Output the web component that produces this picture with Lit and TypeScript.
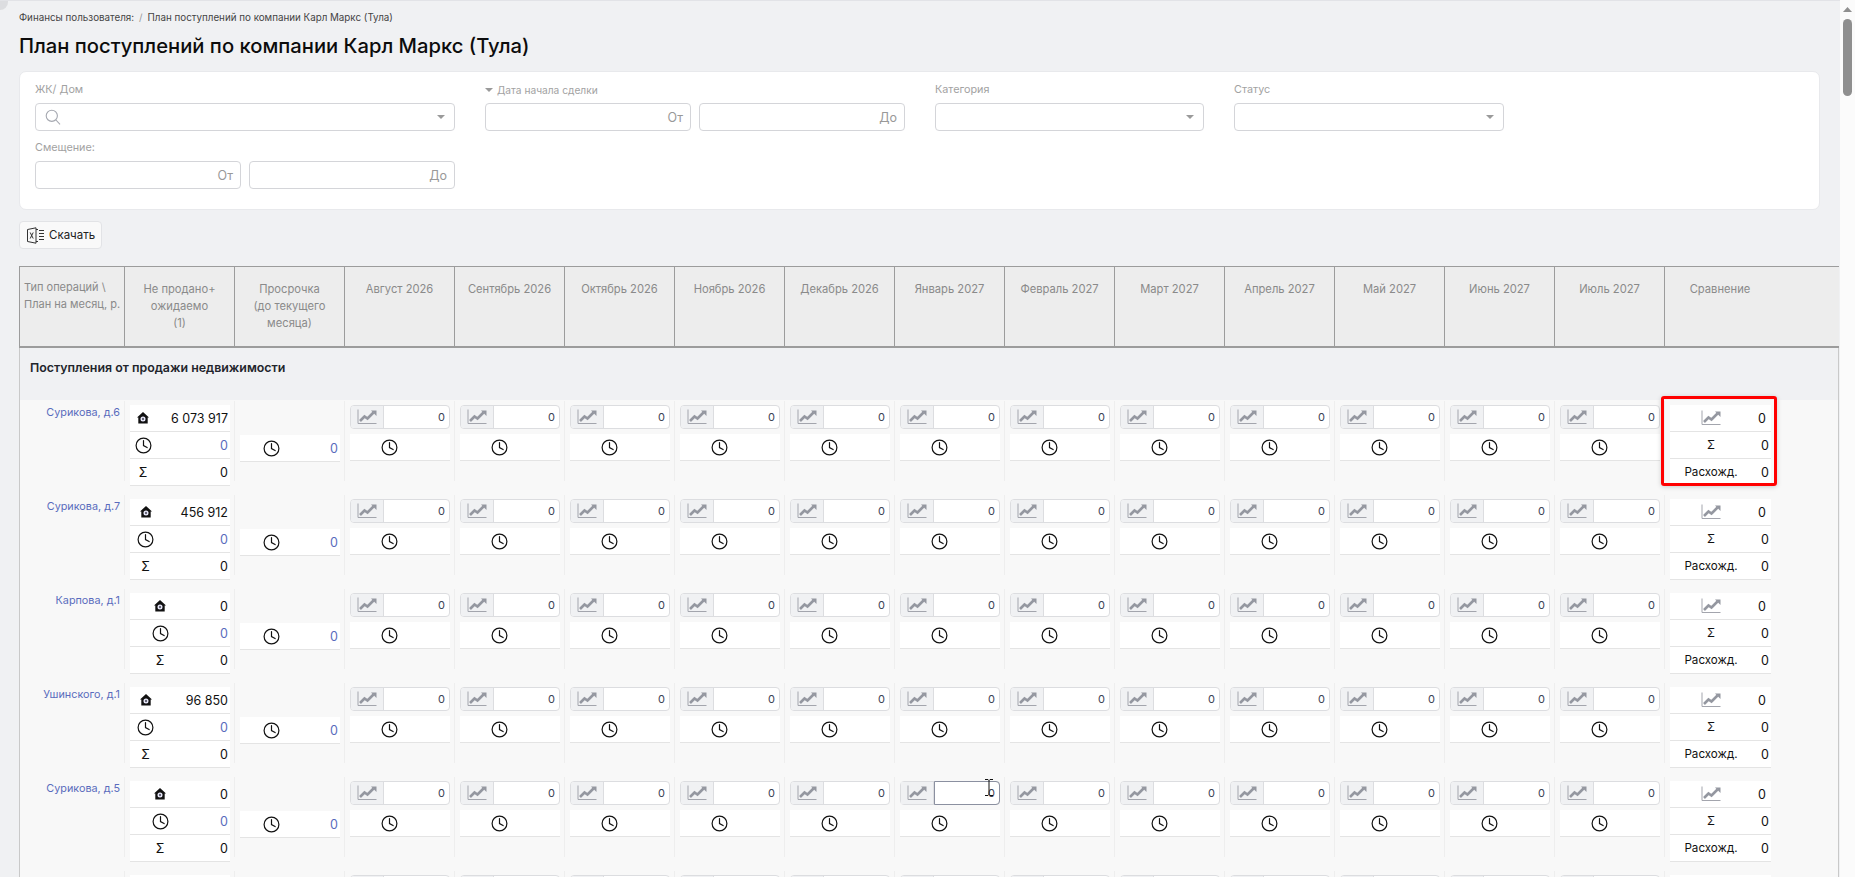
import { LitElement, html, css, svg } from 'lit';
import { customElement } from 'lit/decorators.js';

const MONTHS = [
  'Август 2026', 'Сентябрь 2026', 'Октябрь 2026', 'Ноябрь 2026', 'Декабрь 2026', 'Январь 2027',
  'Февраль 2027', 'Март 2027', 'Апрель 2027', 'Май 2027', 'Июнь 2027', 'Июль 2027',
];

// iconCol is the width the icon column ends up with next to the value
const ROWS = [
  { name: 'Сурикова, д.6', plan: '6 073 917', iconCol: 26, marked: true },
  { name: 'Сурикова, д.7', plan: '456 912', iconCol: 31 },
  { name: 'Карпова, д.1', plan: '0', iconCol: 60 },
  { name: 'Ушинского, д.1', plan: '96 850', iconCol: 31 },
  { name: 'Сурикова, д.5', plan: '0', iconCol: 60, focusMonth: 5 },
];

const clock = () => html`<svg class="ico" width="17" height="17" viewBox="0 0 17 17" fill="none" stroke="#111" stroke-width="1.2">
  <circle cx="8.5" cy="8.5" r="7.4"></circle><path d="M8.5 3.6v5l3.6 2" stroke-linecap="round"></path></svg>`;

const house = () => html`<svg class="ico" width="12" height="12" viewBox="0 0 11 11">
  <path d="M5.5 0 11 5H9.8v5.5H1.2V5H0z" fill="#111"></path>
  <circle cx="5.5" cy="6.4" r="2.3" fill="#eef"></circle><circle cx="5.5" cy="6.4" r="1.1" fill="#667"></circle></svg>`;

const chart = () => html`<svg class="ico" width="20" height="16" viewBox="0 0 20 16" fill="none">
  <path d="M1 .5v14h18.5" stroke="#a3a5ad" stroke-width="1"></path>
  <path d="M3 12 7.5 7.5l3 2 6-6" stroke="#9497a0" stroke-width="2.6"></path>
  <path d="M14 1.5h5.5V7z" fill="#9497a0"></path></svg>`;

const caret = svg`<path d="M0 0h8L4 4z" fill="#9a9a9a"></path>`;

@customElement('app-root')
export class AppRoot extends LitElement {
  static styles = css`
    :host {
      display: flex;
      height: 100vh;
      overflow: hidden;
      background: #fbfbfb;
      font-family: Inter, 'Noto Sans', sans-serif;
      font-size: 12px;
      color: #111;
    }
    .main {
      position: relative;
      width: 1840px;
      flex: none;
      box-sizing: border-box;
      height: 877px;
      overflow: hidden;
      padding: 11px 0 0 19px;
      background: #f0f1f3;
      border-top: 1px solid #e2e3e7;
    }
    .corner {
      position: absolute;
      left: 0;
      top: -1px;
      width: 8px;
      height: 10px;
      background: #dcdde0;
      border-bottom-right-radius: 8px;
    }
    .crumbs {
      height: 11px;
      line-height: 11px;
      font-size: 9.8px;
      color: #444;
      display: flex;
      gap: 5px;
    }
    .crumbs i { color: #999; font-style: normal; }
    h1 {
      margin: 11px 0 0;
      height: 24px;
      line-height: 24px;
      font-size: 20.2px;
      font-weight: 500;
      color: #0c0c0c;
    }
    .filters {
      box-sizing: border-box;
      width: 1801px;
      height: 139px;
      margin-top: 13px;
      padding: 11px 15px 0;
      background: #fff;
      border: 1px solid #e8e9ec;
      border-radius: 7px;
      display: grid;
      grid-template-columns: 420px 420px 269px 299px;
      grid-template-rows: 58px 58px;
      column-gap: 30px;
    }
    .filters > div { min-width: 0; }
    .lbl {
      height: 14px;
      line-height: 14px;
      font-size: 10.8px;
      color: #a2a2a2;
      display: flex;
      align-items: center;
      gap: 4px;
      margin-bottom: 6px;
    }
    .lbl.date { font-size: 10.2px; }
    .inp {
      box-sizing: border-box;
      height: 28px;
      background: #fff;
      border: 1px solid #d4d5d9;
      border-radius: 4px;
      display: flex;
      align-items: center;
      justify-content: space-between;
      padding: 0 9px;
      color: #999;
      font-size: 12.5px;
    }
    .pair { display: grid; grid-template-columns: 206px 206px; column-gap: 8px; }
    .inp.to { justify-content: flex-end; padding: 0 7px; }
    .inp.end { justify-content: flex-end; }
    .cat { width: 269px; }
    .stat { width: 270px; }
    .btn {
      box-sizing: border-box;
      width: 83px;
      height: 28px;
      margin-top: 11px;
      display: flex;
      align-items: center;
      gap: 4px;
      padding-left: 7px;
      background: #f9f9f9;
      border: 1px solid #e2e3e6;
      border-radius: 4px;
      font-size: 11.5px;
      color: #222;
    }
    .table {
      width: 1820px;
      margin-top: 17px;
    }
    .head, .row {
      display: grid;
      grid-template-columns: 105px repeat(15, 110px) 1fr;
    }
    .head {
      box-sizing: border-box;
      height: 82px;
      background: #ededed;
      border: 1px solid #9c9c9c;
      border-width: 1px 0 2px 1px;
      color: #8a8a8a;
      font-size: 11.2px;
      line-height: 17px;
    }
    .head > div {
      box-sizing: border-box;
      padding-top: 14px;
      text-align: center;
      border-right: 1px solid #9c9c9c;
    }
    .head > div:first-child { padding: 12px 0 0 4px; text-align: left; white-space: nowrap; font-size: 11px; }
    .head > div:nth-last-child(-n + 2) { border-right: none; }
    .body {
      border: 1px solid #c9c9c9;
      border-width: 0 1px 0 1px;
      width: 1818px;
    }
    .section {
      box-sizing: border-box;
      height: 52px;
      padding: 12px 0 0 10px;
      line-height: 16px;
      font-size: 12.4px;
      font-weight: 600;
      color: #22252b;
    }
    .row {
      height: 94px;
      background: #f8f8f8;
      align-items: start;
      padding-top: 1px;
      box-sizing: border-box;
    }
    .cell {
      position: relative;
      box-sizing: border-box;
      height: 80px;
      border-right: 1px solid #eeeeee;
      padding: 4px 4px 0 5px;
    }
    .cell:nth-last-child(-n + 2) { border-right: none; }
    .name {
      padding: 4px 4px 0 0;
      text-align: right;
      line-height: 16px;
      color: #5a6cbd;
      font-size: 10.8px;
    }
    .line {
      box-sizing: border-box;
      height: 27px;
      display: grid;
      align-items: center;
      justify-items: center;
      background: #fff;
      border-bottom: 1px solid #e4e4e4;
      font-size: 12.5px;
    }
    .line b { justify-self: end; padding-right: 2px; font-weight: 400; }
    .line .blue { color: #5a6cbd; }
    .ico { display: block; }
    .delay {
      box-sizing: border-box;
      height: 27px;
      margin-top: 30px;
      display: grid;
      grid-template-columns: 62px 1fr;
      align-items: center;
      justify-items: center;
      background: #fff;
      border-bottom: 1px solid #e4e4e4;
      font-size: 12.5px;
      color: #5a6cbd;
    }
    .delay b { justify-self: end; padding-right: 2px; font-weight: 400; }
    .plan {
      box-sizing: border-box;
      height: 24px;
      display: flex;
      border: 1px solid #dcdde0;
      border-radius: 4px;
      background: #fff;
      overflow: hidden;
    }
    .plan .add {
      width: 32px;
      flex: none;
      display: flex;
      align-items: center;
      justify-content: center;
      background: #f0f1f3;
      border-right: 1px solid #dcdde0;
    }
    .plan .val {
      flex: 1;
      text-align: right;
      padding-right: 4px;
      line-height: 22px;
      font-size: 11px;
      color: #3b4256;
    }
    .plan.focus { overflow: visible; }
    .plan.focus .val { margin: -1px -1px -1px 0; border: 1px solid #8b90a0; border-radius: 0 4px 4px 0; }
    .beam { position: absolute; left: 90px; top: 2px; z-index: 2; }
    .clock {
      box-sizing: border-box;
      height: 27px;
      margin-top: 5px;
      padding-left: 31px;
      display: flex;
      align-items: center;
      background: #fff;
      border-bottom: 1px solid #e4e4e4;
    }
    .cmp { position: relative; width: 101px; }
    .cmp .line { grid-template-columns: 82px 1fr; font-size: 11.6px; }
    .cmp .line b { font-size: 12.5px; }
    .cmp .line.top b { padding-right: 5px; }
    .mark {
      position: absolute;
      left: -9px;
      top: -9px;
      width: 116px;
      height: 90px;
      box-sizing: border-box;
      border: 3px solid #f00;
      border-radius: 3px;
      box-shadow: 0 1px 5px rgba(0, 0, 0, 0.18);
      pointer-events: none;
    }
    .scroll {
      position: relative;
      flex: 1;
      background: #fbfbfb;
    }
    .thumb {
      position: absolute;
      left: 3px;
      top: 19px;
      width: 9px;
      height: 77px;
      border-radius: 5px;
      background: #8f8f8f;
    }
    .arrow {
      position: absolute;
      left: 3px;
      top: 7px;
    }
  `;

  private planRow(row: typeof ROWS[number]) {
    const cols = `grid-template-columns:${row.iconCol}px 1fr`;
    return html`<div class="row">
      <div class="cell name">${row.name}</div>
      <div class="cell">
        <div class="line" style=${cols}>${house()}<b>${row.plan}</b></div>
        <div class="line" style=${cols}>${clock()}<b class="blue">0</b></div>
        <div class="line" style=${cols}><span>Σ</span><b>0</b></div>
      </div>
      <div class="cell"><div class="delay">${clock()}<b>0</b></div></div>
      ${MONTHS.map((_, i) => html`<div class="cell">
        <div class="plan ${row.focusMonth === i ? 'focus' : ''}">
          <div class="add">${chart()}</div>
          <div class="val">0</div>
        </div>
        ${row.focusMonth === i
          ? html`<svg class="beam" width="8" height="17" viewBox="0 0 8 17" fill="none" stroke="#111" stroke-width="1"><path d="M0 .5h3l1 1 1-1h3M4 1.5v14M0 16.5h3l1-1 1 1h3"></path></svg>`
          : ''}
        <div class="clock">${clock()}</div>
      </div>`)}
      <div class="cell">
        <div class="cmp">
          <div class="line top">${chart()}<b>0</b></div>
          <div class="line"><span>Σ</span><b>0</b></div>
          <div class="line"><span>Расхожд.</span><b>0</b></div>
          ${row.marked ? html`<div class="mark"></div>` : ''}
        </div>
      </div>
      <div></div>
    </div>`;
  }

  // only the top edge of the next row shows above the fold, so no text in it
  private nextRowEdge() {
    return html`<div class="row">
      <div class="cell"></div>
      <div class="cell"><div class="line"></div></div>
      <div class="cell"></div>
      ${MONTHS.map(() => html`<div class="cell"><div class="plan"><div class="add"></div></div></div>`)}
      <div class="cell"><div class="cmp"><div class="line"></div></div></div>
      <div></div>
    </div>`;
  }

  render() {
    return html`
      <div class="main">
        <div class="corner"></div>
        <div class="crumbs"><span>Финансы пользователя:</span><i>/</i><span>План поступлений по компании Карл Маркс (Тула)</span></div>
        <h1>План поступлений по компании Карл Маркс (Тула)</h1>
        <div class="filters">
          <div>
            <div class="lbl">ЖК/ Дом</div>
            <div class="inp">
              <svg width="16" height="16" viewBox="0 0 16 16" fill="none" stroke="#a5a8b0" stroke-width="1.1"><circle cx="6.8" cy="6.8" r="5.6"></circle><path d="m11 11 4 4.4"></path></svg>
              <svg width="8" height="4" viewBox="0 0 8 4">${caret}</svg>
            </div>
          </div>
          <div>
            <div class="lbl date"><svg width="8" height="4" viewBox="0 0 8 4">${caret}</svg>Дата начала сделки</div>
            <div class="pair"><div class="inp to">От</div><div class="inp to">До</div></div>
          </div>
          <div>
            <div class="lbl">Категория</div>
            <div class="inp cat end"><svg width="8" height="4" viewBox="0 0 8 4">${caret}</svg></div>
          </div>
          <div>
            <div class="lbl">Статус</div>
            <div class="inp stat end"><svg width="8" height="4" viewBox="0 0 8 4">${caret}</svg></div>
          </div>
          <div>
            <div class="lbl">Смещение:</div>
            <div class="pair"><div class="inp to">От</div><div class="inp to">До</div></div>
          </div>
        </div>
        <div class="btn">
          <svg width="18" height="17" viewBox="0 0 18 17" fill="none" stroke="#333" stroke-width="1">
            <path d="M.5 2.5 9 .8v15.4L.5 14.5zM9 2.5h2M9 14.5h2"></path>
            <path d="m3.2 5.5 3 6M6.2 5.5l-3 6"></path>
            <path d="M12 3.5h5M12 6.5h5M12 9.5h5M12 12.5h5"></path>
          </svg>
          Скачать
        </div>
        <div class="table">
          <div class="head">
            <div>Тип операций \\<br />План на месяц, р.</div>
            <div>Не продано+<br />ожидаемо<br />(1)</div>
            <div>Просрочка<br />(до текущего<br />месяца)</div>
            ${MONTHS.map((m) => html`<div>${m}</div>`)}
            <div>Сравнение</div>
            <div></div>
          </div>
          <div class="body">
            <div class="section">Поступления от продажи недвижимости</div>
            ${ROWS.map((r) => this.planRow(r))}
            ${this.nextRowEdge()}
          </div>
        </div>
      </div>
      <div class="scroll">
        <svg class="arrow" width="9" height="5" viewBox="0 0 9 5"><path d="M0 5h9L4.5 0z" fill="#8f8f8f"></path></svg>
        <div class="thumb"></div>
      </div>
    `;
  }
}
